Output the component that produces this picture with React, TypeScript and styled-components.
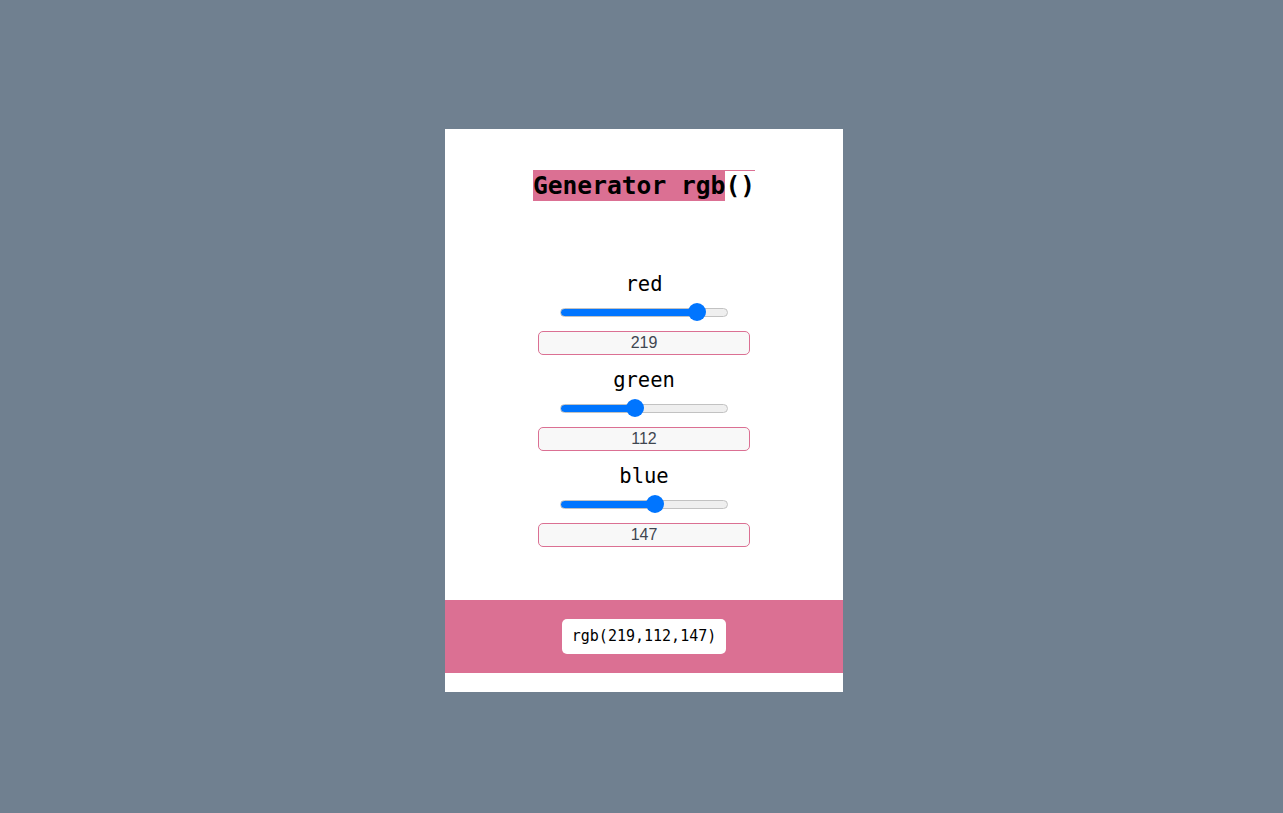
import React, { useState } from "react";
import styled, { createGlobalStyle } from "styled-components";

const Global = createGlobalStyle`
  html, body { margin: 0; padding: 0; background: #708090; }
  body { font-family: "DejaVu Sans Mono", monospace; }
`;

const Page = styled.div`
  min-height: 813px;
  display: flex;
  justify-content: center;
  align-items: flex-start;
  padding: 129px 0 0 5px;
  box-sizing: border-box;
`;

const Card = styled.div`
  width: 398px;
  background: #ffffff;
  display: flex;
  flex-direction: column;
  align-items: center;
  padding: 41px 0 19px;
`;

const Title = styled.h1`
  margin: 0;
  font-family: "DejaVu Sans Mono", monospace;
  font-weight: bold;
  font-size: 24.6px;
  color: #000;
  text-align: center;
`;

const Mark = styled.span`
  display: inline-block;
  background: #db7093;
  line-height: 30px;
  padding-top: 1px;
`;

const Paren = styled.span`
  display: inline-block;
  background: #ffffff;
  line-height: 30px;
  height: 30px;
  vertical-align: top;
`;

const Controls = styled.div`
  margin-top: 71px;
  display: flex;
  flex-direction: column;
  align-items: center;
  gap: 13px;
`;

const Group = styled.div`
  display: flex;
  flex-direction: column;
  align-items: center;
`;

const Label = styled.label`
  font-family: "DejaVu Sans Mono", monospace;
  font-size: 20.5px;
  line-height: 24px;
  height: 24px;
  color: #000;
`;

const Range = styled.input`
  -webkit-appearance: none;
  appearance: none;
  width: 168px;
  height: 18px;
  margin: 7px 0 10px;
  padding: 0;
  background: transparent;
  outline: none;

  &::-webkit-slider-runnable-track {
    height: 9px;
    border-radius: 5px;
    box-sizing: border-box;
    border: 1px solid #c2c2c2;
    background: linear-gradient(
      to right,
      #0075ff 0,
      #0075ff calc(9px + (100% - 18px) * var(--v)),
      #efefef calc(9px + (100% - 18px) * var(--v)),
      #efefef 100%
    );
  }
  &::-webkit-slider-thumb {
    -webkit-appearance: none;
    appearance: none;
    width: 18px;
    height: 18px;
    border-radius: 50%;
    background: #0075ff;
    border: none;
    margin-top: -5.5px;
  }
`;

const NumberBox = styled.input`
  width: 212px;
  height: 24px;
  box-sizing: border-box;
  border: 1px solid #db7093;
  border-radius: 5px;
  background: #f8f8f8;
  font-family: "Liberation Sans", Arial, sans-serif;
  font-size: 16px;
  color: #3f4650;
  text-align: center;
  padding: 0;
  outline: none;
`;

const Band = styled.div`
  align-self: stretch;
  margin-top: 53px;
  height: 73px;
  background: #db7093;
  display: flex;
  align-items: center;
  justify-content: center;
`;

const Chip = styled.div`
  height: 35px;
  line-height: 35px;
  padding: 0 10px;
  background: #ffffff;
  border-radius: 5px;
  font-family: "DejaVu Sans Mono", monospace;
  font-size: 15px;
  color: #000;
`;

type Channel = "red" | "green" | "blue";

export default function App() {
  const [vals, setVals] = useState<Record<Channel, number>>({
    red: 219,
    green: 112,
    blue: 147,
  });
  const channels: Channel[] = ["red", "green", "blue"];
  const set = (c: Channel, v: string) =>
    setVals((p) => ({ ...p, [c]: Math.max(0, Math.min(255, Number(v) || 0)) }));

  return (
    <>
      <Global />
      <Page>
        <Card>
          <Title>
            <Mark>
              Generator rgb<Paren>()</Paren>
            </Mark>
          </Title>
          <Controls>
            {channels.map((c) => (
              <Group key={c}>
                <Label htmlFor={`r-${c}`}>{c}</Label>
                <Range
                  id={`r-${c}`}
                  type="range"
                  min={0}
                  max={255}
                  value={vals[c]}
                  onChange={(e) => set(c, e.target.value)}
                  style={{ ["--v" as any]: vals[c] / 255 }}
                />
                <NumberBox
                  type="text"
                  value={vals[c]}
                  onChange={(e) => set(c, e.target.value)}
                />
              </Group>
            ))}
          </Controls>
          <Band>
            <Chip>
              rgb({vals.red},{vals.green},{vals.blue})
            </Chip>
          </Band>
        </Card>
      </Page>
    </>
  );
}
